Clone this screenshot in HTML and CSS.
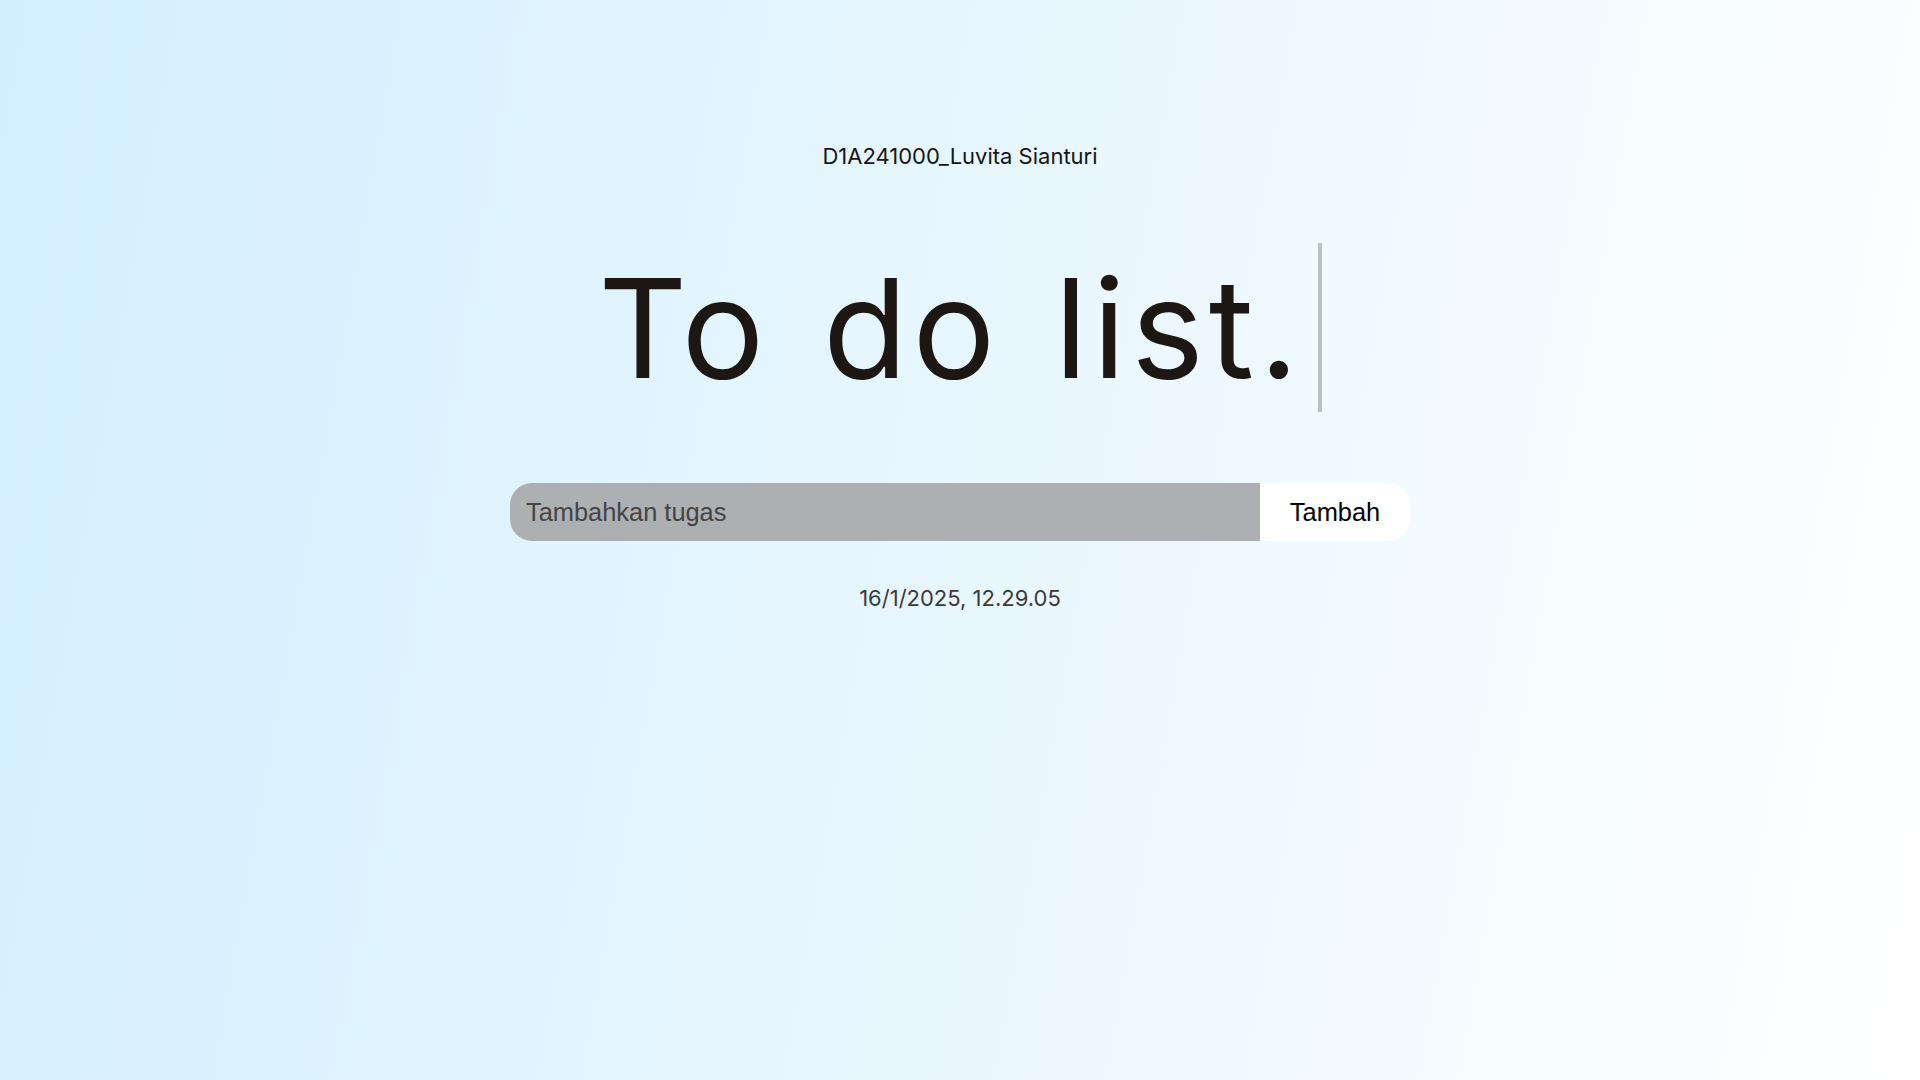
FILE: index.html
```html
<!DOCTYPE html>
<html lang="id">
<head>
<meta charset="utf-8">
<title>To do list</title>
<link rel="stylesheet" href="styles.css">
</head>
<body>
<main class="page">
  <p class="owner">D1A241000_Luvita Sianturi</p>
  <h1 class="title"><span class="typed">To do list.</span></h1>
  <form class="add-form">
    <input class="task-input" type="text" placeholder="Tambahkan tugas">
    <button class="add-btn" type="button">Tambah</button>
  </form>
  <p class="clock">16/1/2025, 12.29.05</p>
</main>
</body>
</html>
```
FILE: styles.css
```css
html, body {
  margin: 0;
  padding: 0;
  height: 100%;
}
body {
  background: linear-gradient(100deg, #d3effe 0%, #e6f6fe 45%, #ffffff 100%);
  font-family: Inter, "Noto Sans", sans-serif;
  color: #1c1712;
}
.page {
  display: flex;
  flex-direction: column;
  align-items: center;
  padding-top: 143px;
}
.owner {
  margin: 0;
  font-size: 22px;
  line-height: 27px;
  color: #151515;
}
.title {
  margin: 73px 0 0 0;
  font-weight: 400;
  font-size: 138px;
  line-height: 169px;
  letter-spacing: 5px;
  word-spacing: 10px;
  color: #1c1712;
}
.typed {
  display: inline-block;
  padding-right: 14px;
  border-right: 4px solid #b9c1c5;
}
.add-form {
  display: flex;
  margin-top: 71px;
  width: 900px;
  height: 58px;
}
.task-input {
  flex: 1;
  border: none;
  outline: none;
  background: #adb0b3;
  border-radius: 22px 0 0 22px;
  padding: 0 16px;
  font-family: "Liberation Sans", Arial, sans-serif;
  font-size: 25.4px;
  color: #333;
}
.task-input::placeholder {
  color: #444444;
}
.add-btn {
  width: 150px;
  border: none;
  background: #ffffff;
  border-radius: 0 22px 22px 0;
  font-family: "Liberation Sans", Arial, sans-serif;
  font-size: 25.4px;
  color: #000;
  padding: 0;
}
.clock {
  margin: 44px 0 0 0;
  font-size: 22px;
  line-height: 27px;
  color: #3a3a3a;
}
```
